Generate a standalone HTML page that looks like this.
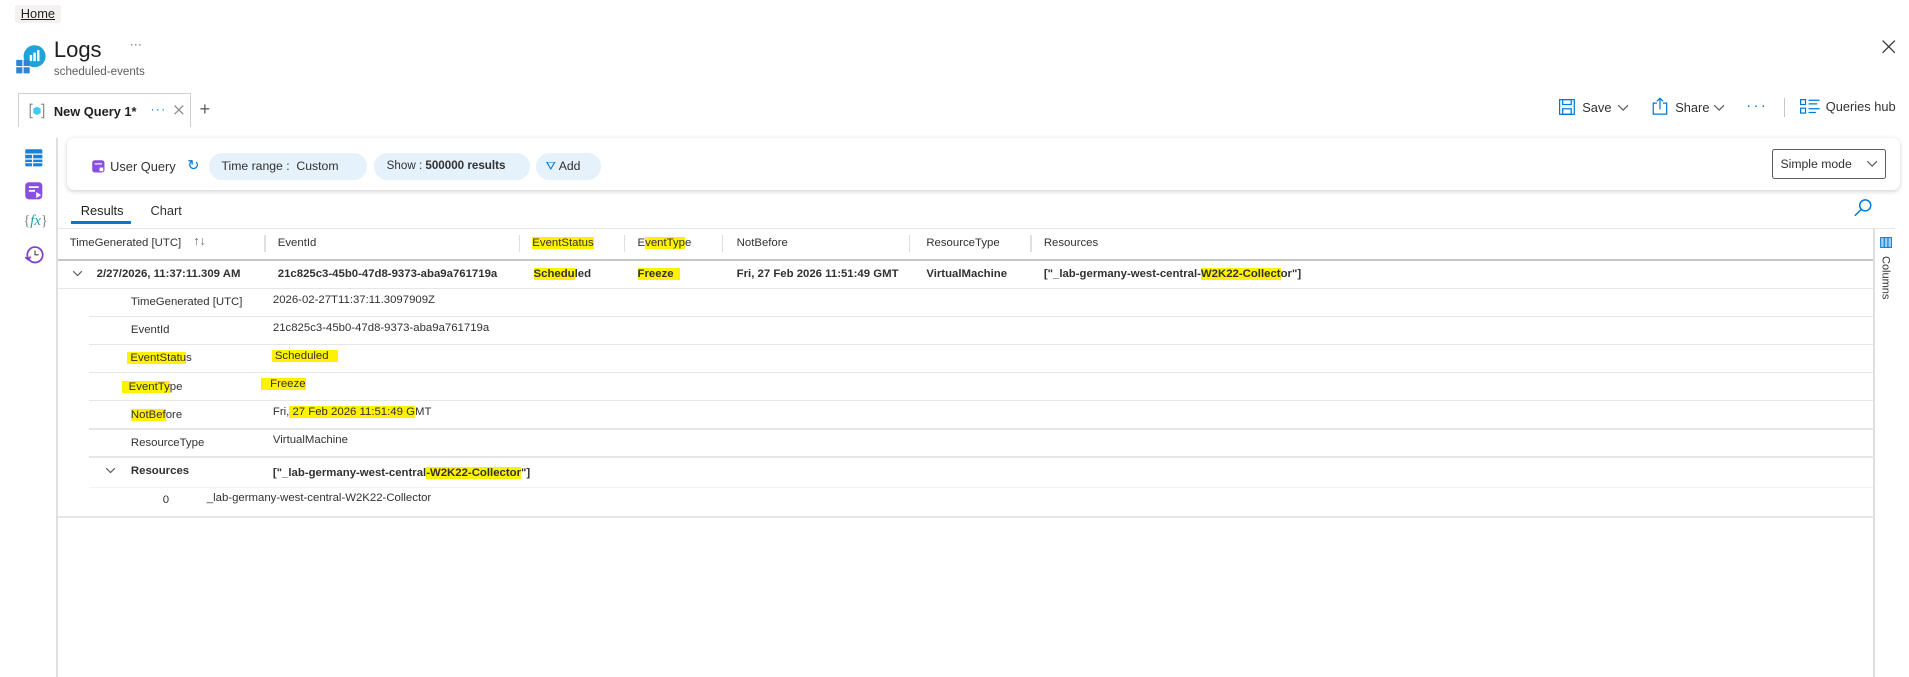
<!DOCTYPE html>
<html><head><meta charset="utf-8">
<style>
html,body{margin:0;padding:0;background:#fff;overflow:hidden;width:1909px;height:677px}
#w{zoom:1.2237;position:relative;width:1560px;height:553px;font-family:"Liberation Sans",sans-serif;color:#323130;font-size:9.3px}
.a{position:absolute;white-space:nowrap}
.hl{background:#fff200}
.ln{position:absolute;height:1px;background:#e8e6e4}
.vs{position:absolute;width:1px;height:14px;background:#e1dfdd;top:192px}
.pill{position:absolute;top:125px;height:22px;border-radius:11px;background:#e5f1fb;font-size:10px;line-height:22px;padding:0 10px;box-sizing:border-box}
.b{font-weight:bold}
</style></head><body><div id="w">
<div class="a" style="left:12px;top:4px;width:38px;height:15px;background:#f3f2f1;border-radius:2px"></div>
<div class="a" style="left:17px;top:5px;font-size:10.5px;text-decoration:underline;color:#201f1e">Home</div>
<svg class="a" style="left:12px;top:36px" width="26" height="26" viewBox="0 0 26 26"><circle cx="16" cy="10" r="9" fill="#1fa3d8"/><rect x="12" y="9" width="2" height="5" fill="#fff"/><rect x="15" y="7" width="2" height="7" fill="#fff"/><rect x="18" y="5" width="2" height="9" fill="#fff"/><rect x="1" y="13" width="5" height="5" fill="#2d84d6"/><rect x="7" y="13" width="5" height="5" fill="#2d84d6"/><rect x="1" y="19" width="5" height="5" fill="#2d84d6"/><rect x="7" y="19" width="5" height="5" fill="#2d84d6"/></svg>
<div class="a" style="left:44px;top:30px;font-size:18px;color:#201f1e">Logs</div>
<div class="a" style="left:106px;top:30px;font-size:10px;color:#605e5c">···</div>
<div class="a" style="left:44px;top:53px;font-size:9.5px;color:#605e5c">scheduled-events</div>
<svg class="a" style="left:1538px;top:33px" width="11" height="11"><path d="M0.5 0.5l10 10M10.5 0.5l-10 10" stroke="#323130"/></svg>
<div class="a" style="left:15px;top:76px;width:141px;height:28px;border:1px solid #d2d0ce;border-bottom:none;box-sizing:border-box;background:#fff"></div>
<svg class="a" style="left:24px;top:84px" width="13" height="13" viewBox="0 0 13 13"><path d="M3 1H1v11h2M10 1h2v11h-2" stroke="#8a8886" fill="none"/><path d="M6.5 3l3 1.6v3.6l-3 1.6-3-1.6V4.6z" fill="#3ccbf4"/></svg>
<div class="a b" style="left:44px;top:85px;font-size:10.5px;color:#201f1e">New Query 1*</div>
<div class="a" style="left:123px;top:83px;font-size:10px;color:#0078d4;letter-spacing:1px">···</div>
<svg class="a" style="left:142px;top:86px" width="8" height="8"><path d="M0.5 0.5l7 7M7.5 0.5l-7 7" stroke="#8a8886"/></svg>
<div class="a" style="left:163px;top:80px;font-size:15px;color:#605e5c">+</div>
<svg class="a" style="left:1274px;top:81px" width="13" height="13" viewBox="0 0 13 13"><rect x="0.5" y="0.5" width="12" height="12" fill="none" stroke="#0078d4"/><rect x="3" y="0.5" width="7" height="4" fill="none" stroke="#0078d4"/><rect x="3" y="8" width="7" height="4.5" fill="none" stroke="#0078d4"/></svg>
<div class="a" style="left:1293px;top:82px;font-size:10.5px">Save</div>
<svg class="a" style="left:1321px;top:85px" width="10" height="6"><path d="M1 1l4 4 4-4" stroke="#605e5c" fill="none"/></svg>
<svg class="a" style="left:1350px;top:79px" width="13" height="15" viewBox="0 0 13 15"><path d="M4 5H1v9h11V5H9M6.5 10V1M4 3.5l2.5-2.5 2.5 2.5" stroke="#0078d4" fill="none"/></svg>
<div class="a" style="left:1369px;top:82px;font-size:10.5px">Share</div>
<svg class="a" style="left:1400px;top:85px" width="10" height="6"><path d="M1 1l4 4 4-4" stroke="#605e5c" fill="none"/></svg>
<div class="a" style="left:1427px;top:80px;font-size:12px;color:#0078d4;letter-spacing:2px">···</div>
<div class="a" style="left:1458px;top:80px;width:1px;height:16px;background:#c8c6c4"></div>
<svg class="a" style="left:1471px;top:81px" width="17" height="13" viewBox="0 0 17 13"><rect x="0.5" y="0.5" width="4" height="4" fill="none" stroke="#0078d4"/><rect x="0.5" y="7.5" width="4" height="4" fill="none" stroke="#0078d4"/><path d="M7 1h9M7 4h7M7 8h9M7 11h6" stroke="#0078d4"/></svg>
<div class="a" style="left:1492px;top:81px;font-size:10.5px">Queries hub</div>
<div class="a" style="left:46px;top:113px;width:1px;height:440px;background:#e1dfdd"></div>
<svg class="a" style="left:20px;top:121px" width="16" height="16" viewBox="0 0 16 16"><rect x="1" y="1" width="14" height="14" rx="1" fill="#1a7fd6"/><path d="M1 5h14M1 9h14M1 12h14M7 5v10" stroke="#fff"/></svg>
<svg class="a" style="left:20px;top:148px" width="16" height="16" viewBox="0 0 16 16"><rect x="1" y="1" width="14" height="14" rx="3" fill="#8a4fe0"/><path d="M4 5h8M4 8h5" stroke="#fff" stroke-width="1.5"/><path d="M10 9l4 2.5-4 2.5z" fill="#fff"/></svg>
<div class="a" style="left:19px;top:174px;font-size:12px;color:#8a8886;font-family:'Liberation Serif',serif">{<i style="color:#1f9fae">fx</i>}</div>
<svg class="a" style="left:20px;top:200px" width="16" height="16" viewBox="0 0 16 16"><circle cx="9" cy="8" r="6.3" fill="none" stroke="#7b3ec9" stroke-width="1.4"/><path d="M9 4.5V8h3" stroke="#555" fill="none"/><path d="M1 10l2.5 2 2-2.5" stroke="#7b3ec9" fill="none" stroke-width="1.4"/></svg>
<div class="a" style="left:55px;top:113px;width:1498px;height:42px;background:#fff;border-radius:6px;box-shadow:0 1px 4px rgba(0,0,0,.18)"></div>
<svg class="a" style="left:74px;top:130px" width="12" height="12" viewBox="0 0 12 12"><rect x="1" y="1" width="10" height="10" rx="2" fill="#8a4fe0"/><path d="M3 4h6" stroke="#fff"/><rect x="7" y="7" width="3" height="3" fill="#fff"/></svg>
<div class="a" style="left:90px;top:130px;font-size:10.5px">User Query</div>
<div class="a" style="left:153px;top:128px;font-size:12px;color:#0078d4">↻</div>
<div class="pill" style="left:171px;width:129px">Time range :&nbsp; Custom</div>
<div class="pill" style="left:306px;width:127px;font-size:9.5px">Show : <b>500000 results</b></div>
<div class="pill" style="left:438px;width:53px;padding-left:8px"><span style="color:#0078d4">⛛</span> Add</div>
<div class="a" style="left:1448px;top:122px;width:93px;height:24px;border:1px solid #605e5c;border-radius:2px;box-sizing:border-box"></div>
<div class="a" style="left:1455px;top:128px;font-size:10px">Simple mode</div>
<svg class="a" style="left:1525px;top:131px" width="10" height="6"><path d="M1 1l4 4 4-4" stroke="#605e5c" fill="none"/></svg>
<div class="a" style="left:66px;top:166px;font-size:10.5px;color:#201f1e">Results</div>
<div class="a" style="left:58px;top:181px;width:49px;height:2px;background:#0078d4"></div>
<div class="a" style="left:123px;top:166px;font-size:10.5px">Chart</div>
<svg class="a" style="left:1514px;top:162px" width="16" height="16" viewBox="0 0 16 16"><circle cx="10" cy="6" r="4.5" fill="none" stroke="#0078d4" stroke-width="1.2"/><path d="M6.8 9.2L1.5 14.5" stroke="#0078d4" stroke-width="1.2"/></svg>
<div class="ln" style="left:47px;top:186px;width:1502px"></div>
<div class="ln" style="left:47px;top:212px;width:1484px;background:#c8c6c4"></div>
<div class="a" style="left:57px;top:194px">TimeGenerated [UTC]</div>
<div class="a" style="left:158px;top:191px;font-size:10px;color:#605e5c">↑↓</div>
<div class="vs" style="left:216px"></div><div class="a" style="left:227px;top:194px">EventId</div>
<div class="vs" style="left:424px"></div><div class="a" style="left:435px;top:194px"><span class="hl">EventStatus</span></div>
<div class="vs" style="left:510px"></div><div class="a" style="left:521px;top:194px">E<span class="hl">ventTyp</span>e</div>
<div class="vs" style="left:590px"></div><div class="a" style="left:602px;top:194px">NotBefore</div>
<div class="vs" style="left:743px"></div><div class="a" style="left:757px;top:194px">ResourceType</div>
<div class="vs" style="left:842px"></div><div class="a" style="left:853px;top:194px">Resources</div>
<div class="a" style="left:1531px;top:186px;width:1px;height:367px;background:#e1dfdd"></div>
<svg class="a" style="left:1536px;top:194px" width="10" height="9"><rect x="0.5" y="0.5" width="3" height="8" fill="#9fd0f5" stroke="#0078d4" stroke-width=".8"/><rect x="3.5" y="0.5" width="3" height="8" fill="#9fd0f5" stroke="#0078d4" stroke-width=".8"/><rect x="6.5" y="0.5" width="3" height="8" fill="#9fd0f5" stroke="#0078d4" stroke-width=".8"/></svg>
<div class="a" style="left:1536px;top:209px;font-size:9px;writing-mode:vertical-rl">Columns</div>
<svg class="a" style="left:59px;top:221px" width="9" height="6"><path d="M1 1l3.5 3.5 3.5-3.5" stroke="#605e5c" fill="none"/></svg>
<div class="a b" style="left:79px;top:219px">2/27/2026, 11:37:11.309 AM</div>
<div class="a b" style="left:227px;top:219px">21c825c3-45b0-47d8-9373-aba9a761719a</div>
<div class="a b" style="left:436px;top:219px"><span class="hl">Schedu</span>led</div>
<div class="a b" style="left:521px;top:219px"><span class="hl">Freeze&nbsp;&nbsp;</span></div>
<div class="a b" style="left:602px;top:219px">Fri, 27 Feb 2026 11:51:49 GMT</div>
<div class="a b" style="left:757px;top:219px">VirtualMachine</div>
<div class="a b" style="left:853px;top:219px">["_lab-germany-west-central-<span class="hl">W2K22-Collect</span>or"]</div>
<div class="ln" style="left:47px;top:235px;width:1484px"></div>
<div class="ln" style="left:73px;top:258px;width:1458px"></div>
<div class="ln" style="left:73px;top:281px;width:1458px"></div>
<div class="ln" style="left:73px;top:304px;width:1458px"></div>
<div class="ln" style="left:73px;top:327px;width:1458px"></div>
<div class="ln" style="left:73px;top:350px;width:1458px"></div>
<div class="ln" style="left:73px;top:373px;width:1458px"></div>
<div class="ln" style="left:73px;top:398px;width:1458px;background:#f3f2f1"></div>
<div class="ln" style="left:47px;top:422px;width:1484px"></div>
<div class="a" style="left:107px;top:242px">TimeGenerated [UTC]</div><div class="a" style="left:223px;top:240px">2026-02-27T11:37:11.3097909Z</div>
<div class="a" style="left:107px;top:265px">EventId</div><div class="a" style="left:223px;top:263px">21c825c3-45b0-47d8-9373-aba9a761719a</div>
<div class="a" style="left:104px;top:288px"><span class="hl">&nbsp;EventStatu</span>s</div><div class="a" style="left:222px;top:286px"><span class="hl">&nbsp;Scheduled&nbsp;&nbsp;&nbsp;</span></div>
<div class="a" style="left:100px;top:311px"><span class="hl">&nbsp;&nbsp;EventTy</span>pe</div><div class="a" style="left:213px;top:309px"><span class="hl">&nbsp;&nbsp;&nbsp;Freeze</span></div>
<div class="a" style="left:107px;top:334px"><span class="hl">NotBef</span>ore</div><div class="a" style="left:223px;top:332px">Fri,<span class="hl"> 27 Feb 2026 11:51:49 G</span>MT</div>
<div class="a" style="left:107px;top:357px">ResourceType</div><div class="a" style="left:223px;top:355px">VirtualMachine</div>
<svg class="a" style="left:86px;top:382px" width="9" height="6"><path d="M1 1l3.5 3.5 3.5-3.5" stroke="#605e5c" fill="none"/></svg>
<div class="a b" style="left:107px;top:380px">Resources</div><div class="a b" style="left:223px;top:382px">["_lab-germany-west-central<span class="hl">-W2K22-Collector</span>"]</div>
<div class="a" style="left:133px;top:404px">0</div><div class="a" style="left:169px;top:402px">_lab-germany-west-central-W2K22-Collector</div>
</div></body></html>
